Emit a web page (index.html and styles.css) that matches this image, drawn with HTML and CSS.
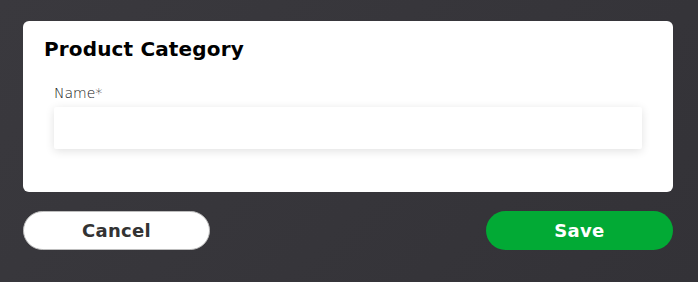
FILE: index.html
```html
<!DOCTYPE html>
<html>
<head>
<meta charset="utf-8">
<link rel="stylesheet" href="styles.css">
</head>
<body>
<div class="page">
  <div class="card">
    <h1 class="title">Product Category</h1>
    <div class="field">
      <label class="label">Name*</label>
      <div class="input"></div>
    </div>
  </div>
  <div class="actions">
    <button class="btn btn-cancel">Cancel</button>
    <button class="btn btn-save">Save</button>
  </div>
</div>
</body>
</html>
```
FILE: styles.css
```css
html, body {
  margin: 0;
  padding: 0;
  height: 100%;
}
body {
  background: linear-gradient(135deg, #3a393e 0%, #333237 100%);
  font-family: "DejaVu Sans", "Open Sans", sans-serif;
}
.page {
  padding: 21px 25px 0 23px;
}
.card {
  background: #fff;
  border-radius: 6px;
  height: 171px;
  box-sizing: border-box;
  padding: 13px 31px 0 21px;
}
.title {
  margin: 0;
  font-family: "DejaVu Sans", sans-serif;
  font-size: 20px;
  line-height: 30px;
  font-weight: 700;
  color: #000;
  letter-spacing: 0.15px;
}
.field {
  margin: 20px 0 0 10px;
}
.label {
  display: block;
  font-family: "DejaVu Sans", sans-serif;
  font-size: 14px;
  font-weight: 200;
  color: #111;
  line-height: 18px;
}
.input {
  margin-top: 5px;
  height: 42px;
  background: #fff;
  box-shadow: 0 2px 10px rgba(0,0,0,0.12);
  border-radius: 2px;
}
.actions {
  display: flex;
  justify-content: space-between;
  margin-top: 19px;
}
.btn {
  width: 187px;
  height: 39px;
  border-radius: 20px;
  font-family: "DejaVu Sans", sans-serif;
  font-size: 18px;
  font-weight: 700;
  box-sizing: border-box;
  padding: 0;
  letter-spacing: 0.3px;
}
.btn-cancel {
  background: #fff;
  color: #333;
  border: 1px solid #bdbdbd;
}
.btn-save {
  background: #02aa35;
  color: #fff;
  border: none;
}
```
